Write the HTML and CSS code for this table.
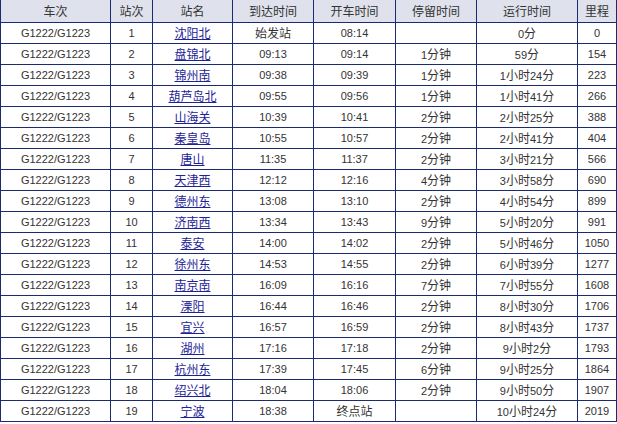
FILE: index.html
```html
<!DOCTYPE html>
<html lang="zh-CN">
<head>
<meta charset="utf-8">
<title>G1222/G1223 时刻表</title>
<link rel="stylesheet" href="styles.css">
</head>
<body>
<table class="tt">
<thead>
<tr>
<th class="c1">车次</th><th class="c2">站次</th><th class="c3">站名</th><th class="c4">到达时间</th><th class="c5">开车时间</th><th class="c6">停留时间</th><th class="c7">运行时间</th><th class="c8">里程</th>
</tr>
</thead>
<tbody>
<tr><td class="m">G1222/G1223</td><td class="m">1</td><td><a href="#">沈阳北</a></td><td>始发站</td><td class="m">08:14</td><td></td><td><span class="n">0</span>分</td><td class="m">0</td></tr>
<tr><td class="m">G1222/G1223</td><td class="m">2</td><td><a href="#">盘锦北</a></td><td class="m">09:13</td><td class="m">09:14</td><td><span class="n">1</span>分钟</td><td><span class="n">59</span>分</td><td class="m">154</td></tr>
<tr><td class="m">G1222/G1223</td><td class="m">3</td><td><a href="#">锦州南</a></td><td class="m">09:38</td><td class="m">09:39</td><td><span class="n">1</span>分钟</td><td><span class="n">1</span>小时<span class="n">24</span>分</td><td class="m">223</td></tr>
<tr><td class="m">G1222/G1223</td><td class="m">4</td><td><a href="#">葫芦岛北</a></td><td class="m">09:55</td><td class="m">09:56</td><td><span class="n">1</span>分钟</td><td><span class="n">1</span>小时<span class="n">41</span>分</td><td class="m">266</td></tr>
<tr><td class="m">G1222/G1223</td><td class="m">5</td><td><a href="#">山海关</a></td><td class="m">10:39</td><td class="m">10:41</td><td><span class="n">2</span>分钟</td><td><span class="n">2</span>小时<span class="n">25</span>分</td><td class="m">388</td></tr>
<tr><td class="m">G1222/G1223</td><td class="m">6</td><td><a href="#">秦皇岛</a></td><td class="m">10:55</td><td class="m">10:57</td><td><span class="n">2</span>分钟</td><td><span class="n">2</span>小时<span class="n">41</span>分</td><td class="m">404</td></tr>
<tr><td class="m">G1222/G1223</td><td class="m">7</td><td><a href="#">唐山</a></td><td class="m">11:35</td><td class="m">11:37</td><td><span class="n">2</span>分钟</td><td><span class="n">3</span>小时<span class="n">21</span>分</td><td class="m">566</td></tr>
<tr><td class="m">G1222/G1223</td><td class="m">8</td><td><a href="#">天津西</a></td><td class="m">12:12</td><td class="m">12:16</td><td><span class="n">4</span>分钟</td><td><span class="n">3</span>小时<span class="n">58</span>分</td><td class="m">690</td></tr>
<tr><td class="m">G1222/G1223</td><td class="m">9</td><td><a href="#">德州东</a></td><td class="m">13:08</td><td class="m">13:10</td><td><span class="n">2</span>分钟</td><td><span class="n">4</span>小时<span class="n">54</span>分</td><td class="m">899</td></tr>
<tr><td class="m">G1222/G1223</td><td class="m">10</td><td><a href="#">济南西</a></td><td class="m">13:34</td><td class="m">13:43</td><td><span class="n">9</span>分钟</td><td><span class="n">5</span>小时<span class="n">20</span>分</td><td class="m">991</td></tr>
<tr><td class="m">G1222/G1223</td><td class="m">11</td><td><a href="#">泰安</a></td><td class="m">14:00</td><td class="m">14:02</td><td><span class="n">2</span>分钟</td><td><span class="n">5</span>小时<span class="n">46</span>分</td><td class="m">1050</td></tr>
<tr><td class="m">G1222/G1223</td><td class="m">12</td><td><a href="#">徐州东</a></td><td class="m">14:53</td><td class="m">14:55</td><td><span class="n">2</span>分钟</td><td><span class="n">6</span>小时<span class="n">39</span>分</td><td class="m">1277</td></tr>
<tr><td class="m">G1222/G1223</td><td class="m">13</td><td><a href="#">南京南</a></td><td class="m">16:09</td><td class="m">16:16</td><td><span class="n">7</span>分钟</td><td><span class="n">7</span>小时<span class="n">55</span>分</td><td class="m">1608</td></tr>
<tr><td class="m">G1222/G1223</td><td class="m">14</td><td><a href="#">溧阳</a></td><td class="m">16:44</td><td class="m">16:46</td><td><span class="n">2</span>分钟</td><td><span class="n">8</span>小时<span class="n">30</span>分</td><td class="m">1706</td></tr>
<tr><td class="m">G1222/G1223</td><td class="m">15</td><td><a href="#">宜兴</a></td><td class="m">16:57</td><td class="m">16:59</td><td><span class="n">2</span>分钟</td><td><span class="n">8</span>小时<span class="n">43</span>分</td><td class="m">1737</td></tr>
<tr><td class="m">G1222/G1223</td><td class="m">16</td><td><a href="#">湖州</a></td><td class="m">17:16</td><td class="m">17:18</td><td><span class="n">2</span>分钟</td><td><span class="n">9</span>小时<span class="n">2</span>分</td><td class="m">1793</td></tr>
<tr><td class="m">G1222/G1223</td><td class="m">17</td><td><a href="#">杭州东</a></td><td class="m">17:39</td><td class="m">17:45</td><td><span class="n">6</span>分钟</td><td><span class="n">9</span>小时<span class="n">25</span>分</td><td class="m">1864</td></tr>
<tr><td class="m">G1222/G1223</td><td class="m">18</td><td><a href="#">绍兴北</a></td><td class="m">18:04</td><td class="m">18:06</td><td><span class="n">2</span>分钟</td><td><span class="n">9</span>小时<span class="n">50</span>分</td><td class="m">1907</td></tr>
<tr><td class="m">G1222/G1223</td><td class="m">19</td><td><a href="#">宁波</a></td><td class="m">18:38</td><td>终点站</td><td></td><td><span class="n">10</span>小时<span class="n">24</span>分</td><td class="m">2019</td></tr>
</tbody>
</table>
</body>
</html>
```

FILE: styles.css
```css
html, body {
  margin: 0;
  padding: 0;
  background: #ffffff;
}

.tt {
  table-layout: fixed;
  border-collapse: separate;
  border-spacing: 0;
  width: 617px;
  border-left: 1px solid #1c2a72;
  box-shadow: 0 1px 0 #d4d4d4;
  font-family: "Noto Sans CJK SC", "Noto Sans", sans-serif;
  font-size: 12px;
  color: #333333;
}

.tt th,
.tt td {
  box-sizing: border-box;
  padding: 0;
  text-align: center;
  vertical-align: middle;
  border-right: 1px solid #1c2a72;
  border-bottom: 1px solid #1c2a72;
  line-height: 14px;
  white-space: nowrap;
  overflow: hidden;
}

.tt th {
  height: 23px;
  font-weight: normal;
  background: #dfe2ec;
  color: #333333;
}

.tt td {
  height: 21px;
}

.c1 { width: 110px; }
.c2 { width: 42px; }
.c3 { width: 80px; }
.c4 { width: 81px; }
.c5 { width: 82px; }
.c6 { width: 81px; }
.c7 { width: 101px; }
.c8 { width: 39px; }

.tt td.m,
.tt .n {
  font-family: "Liberation Sans", Arial, sans-serif;
  font-size: 11px;
}

.tt a {
  color: #1d2396;
  text-decoration: underline;
}
```
